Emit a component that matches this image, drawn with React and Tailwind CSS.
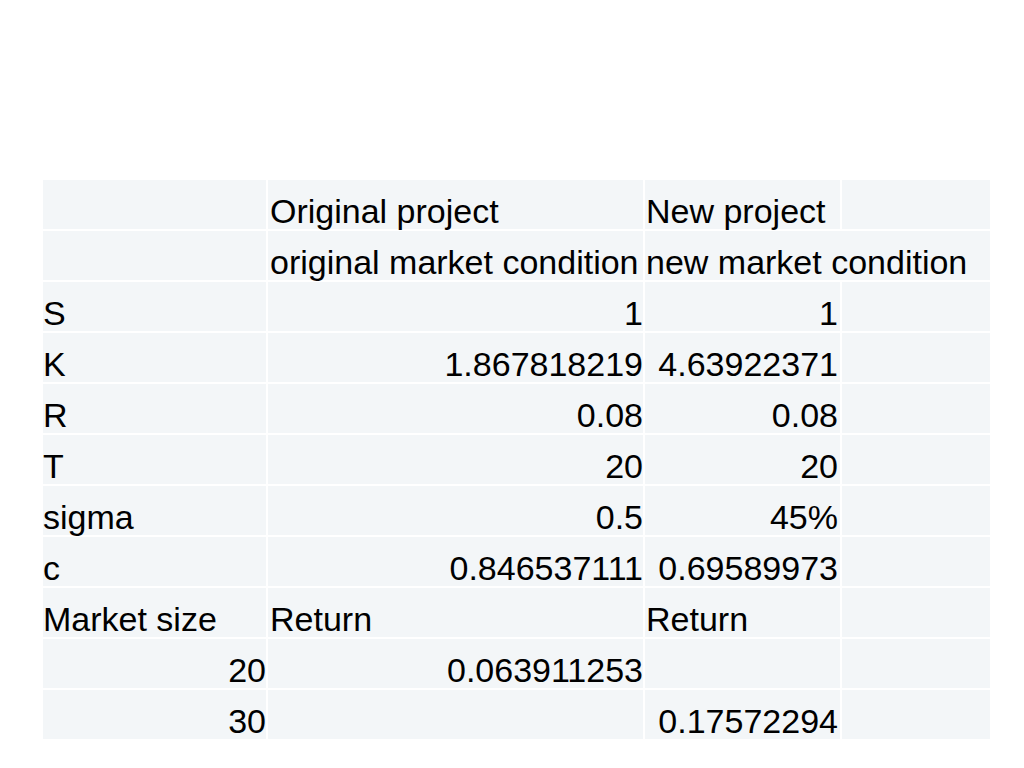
export default function App() {
  const cell = "bg-[#f3f6f8] h-[49px] pt-[14px] leading-[34px] whitespace-nowrap";
  const rows = [
    ["", "Original project", "New project", ""],
    ["", "original market condition", "new market condition", null],
    ["S", "1", "1", ""],
    ["K", "1.867818219", "4.63922371", ""],
    ["R", "0.08", "0.08", ""],
    ["T", "20", "20", ""],
    ["sigma", "0.5", "45%", ""],
    ["c", "0.846537111", "0.69589973", ""],
    ["Market size", "Return", "Return", ""],
    ["20", "0.063911253", "", ""],
    ["30", "", "0.17572294", ""],
  ];
  const textRows = new Set([0, 1, 8]);
  return (
    <div
      className="w-[1024px] h-[768px] bg-white text-black text-[34px]"
      style={{ fontFamily: '"Liberation Sans", Arial, sans-serif' }}
    >
      <div className="pt-[180px] pl-[43px]">
        <div className="grid grid-cols-[223px_375px_195px_148px] gap-[2px] w-[947px]">
          {rows.map((r, i) => {
            const isText = textRows.has(i);
            const c1Right = i >= 9;
            return [
              <div key={i + "a"} className={`${cell} ${c1Right ? "text-right pr-0" : "text-left"}`}>
                {r[0]}
              </div>,
              <div key={i + "b"} className={`${cell} ${isText ? "text-left pl-[2px]" : "text-right pr-0"}`}>
                {r[1]}
              </div>,
              r[3] === null ? (
                <div key={i + "c"} className={`${cell} col-span-2 text-left pl-[1px]`}>
                  {r[2]}
                </div>
              ) : (
                <div key={i + "c"} className={`${cell} ${isText ? "text-left pl-[1px]" : "text-right pr-[2px]"}`}>
                  {r[2]}
                </div>
              ),
              r[3] === null ? null : <div key={i + "d"} className={cell}>{r[3]}</div>,
            ];
          })}
        </div>
      </div>
    </div>
  );
}
